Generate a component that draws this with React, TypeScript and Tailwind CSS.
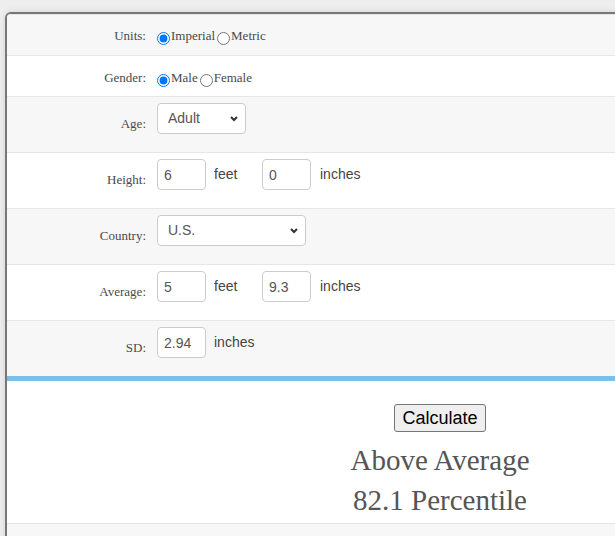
import { ReactNode } from "react";

const serif = "font-['Liberation_Serif',serif]";
const sans = "font-['Liberation_Sans',Arial,sans-serif]";

// one label/value line of the form; radio rows are shorter than input rows
const FormRow = ({
  label,
  shaded,
  compact,
  last,
  children,
}: {
  label: string;
  shaded?: boolean;
  compact?: "first" | "second";
  last?: boolean;
  children: ReactNode;
}) => {
  const bg = shaded ? "bg-[#f7f7f7]" : "bg-white";
  const border = last ? "" : "border-b border-[#e6e6e6]";

  if (compact) {
    return (
      <div
        className={`flex ${bg} ${border} ${
          compact === "first" ? "pt-[13px] pb-[10px]" : "pt-[14px] pb-[9px]"
        }`}
      >
        <div
          className={`w-[143px] shrink-0 pr-[4px] text-right text-[13px] leading-[15px] text-[#4a4a4a] ${serif}`}
        >
          {label}
        </div>
        <div className="flex items-start pl-[7px]">{children}</div>
      </div>
    );
  }

  return (
    <div className={`flex items-end ${bg} ${border} pt-[6px] pb-[18px]`}>
      <div
        className={`w-[143px] shrink-0 pr-[4px] pb-[3px] text-right text-[13px] leading-[15px] text-[#4a4a4a] ${serif}`}
      >
        {label}
      </div>
      <div className={`flex items-center pl-[7px] text-[14px] text-[#444] ${sans}`}>
        {children}
      </div>
    </div>
  );
};

const Radio = ({
  name,
  label,
  checked,
  className = "",
}: {
  name: string;
  label: string;
  checked?: boolean;
  className?: string;
}) => (
  <label className={`flex items-start ${className}`}>
    <input
      type="radio"
      name={name}
      defaultChecked={checked}
      className="m-0 mt-[4px] h-[13px] w-[13px]"
    />
    <span
      className={`ml-[1px] text-[13px] leading-[15px] text-[#4a4a4a] ${serif}`}
    >
      {label}
    </span>
  </label>
);

const TextBox = ({ value }: { value: string }) => (
  <input
    type="text"
    defaultValue={value}
    className={`h-[31px] w-[49px] rounded-[4px] border border-[#ccc] bg-white px-[6px] text-[14px] text-[#555] outline-none ${sans}`}
  />
);

const Select = ({
  width,
  options,
}: {
  width: string;
  options: string[];
}) => (
  <div className={`relative ${width}`}>
    <select
      className={`h-[31px] w-full appearance-none rounded-[4px] border border-[#ccc] bg-white pl-[10px] text-[14px] text-[#555] outline-none ${sans}`}
    >
      {options.map((o) => (
        <option key={o}>{o}</option>
      ))}
    </select>
    <svg
      className="pointer-events-none absolute right-[8px] top-[13px]"
      width="8"
      height="6"
      viewBox="0 0 8 6"
    >
      <polyline
        points="1,1 4,4 7,1"
        fill="none"
        stroke="#333"
        strokeWidth="2"
      />
    </svg>
  </div>
);

export default function App() {
  return (
    <div className="h-screen w-screen overflow-hidden bg-[#eeeeee] pl-[5px] pt-[12px]">
      <div className="w-[760px] overflow-hidden rounded-tl-[6px] border-l-2 border-t-2 border-[#777] bg-white shadow-[0_0_6px_rgba(0,0,0,0.12)]">
        <div className="border-t border-[#e6e6e6]">
          <FormRow label="Units:" shaded compact="first">
            <Radio name="units" label="Imperial" checked />
            <Radio name="units" label="Metric" className="ml-[2px]" />
          </FormRow>
          <FormRow label="Gender:" compact="second">
            <Radio name="gender" label="Male" checked />
            <Radio name="gender" label="Female" className="ml-[2px]" />
          </FormRow>
          <FormRow label="Age:" shaded>
            <Select width="w-[89px]" options={["Adult", "Child"]} />
          </FormRow>
          <FormRow label="Height:">
            <TextBox value="6" />
            <span className="ml-[8px] w-[48px]">feet</span>
            <TextBox value="0" />
            <span className="ml-[9px]">inches</span>
          </FormRow>
          <FormRow label="Country:" shaded>
            <Select width="w-[149px]" options={["U.S.", "Canada", "U.K."]} />
          </FormRow>
          <FormRow label="Average:">
            <TextBox value="5" />
            <span className="ml-[8px] w-[48px]">feet</span>
            <TextBox value="9.3" />
            <span className="ml-[9px]">inches</span>
          </FormRow>
          <FormRow label="SD:" shaded last>
            <TextBox value="2.94" />
            <span className="ml-[8px]">inches</span>
          </FormRow>
        </div>

        {/* result panel */}
        <div className="h-[5px] bg-[#7ac0e2]" />
        <div className="flex pt-[23px] pb-[3px]">
          <div className="w-[143px] shrink-0" />
          <div className="flex w-[580px] flex-col items-center">
            <button
              className={`h-[28px] rounded-[3px] border border-[#767676] bg-[#efefef] px-[7px] text-[18px] leading-[20px] text-black ${sans}`}
            >
              Calculate
            </button>
            <div
              className={`mt-[8px] text-center text-[29px] leading-[40px] text-[#555] ${serif}`}
            >
              <div>Above Average</div>
              <div>82.1 Percentile</div>
            </div>
          </div>
        </div>
        <div className="h-[40px] border-t border-[#e6e6e6] bg-[#f7f7f7]" />
      </div>
    </div>
  );
}
